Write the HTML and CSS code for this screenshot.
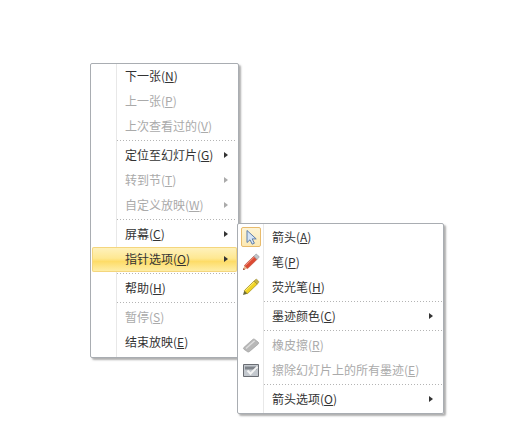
FILE: index.html
```html
<!DOCTYPE html>
<html lang="zh-CN">
<head>
<meta charset="utf-8">
<title>放映菜单</title>
<link rel="stylesheet" href="styles.css">
</head>
<body>
<div class="menu main">
  <div class="item"><span class="label">下一张(<u>N</u>)</span></div>
  <div class="item off"><span class="label">上一张(<u>P</u>)</span></div>
  <div class="item off"><span class="label">上次查看过的(<u>V</u>)</span></div>
  <div class="sep"></div>
  <div class="item"><span class="label">定位至幻灯片(<u>G</u>)</span><i class="arrow"></i></div>
  <div class="item off"><span class="label">转到节(<u>T</u>)</span><i class="arrow"></i></div>
  <div class="item off"><span class="label">自定义放映(<u>W</u>)</span><i class="arrow"></i></div>
  <div class="sep"></div>
  <div class="item"><span class="label">屏幕(<u>C</u>)</span><i class="arrow"></i></div>
  <div class="item hot"><span class="label">指针选项(<u>O</u>)</span><i class="arrow"></i></div>
  <div class="sep"></div>
  <div class="item"><span class="label">帮助(<u>H</u>)</span></div>
  <div class="sep"></div>
  <div class="item off"><span class="label">暂停(<u>S</u>)</span></div>
  <div class="item"><span class="label">结束放映(<u>E</u>)</span></div>
</div>
<div class="menu sub">
  <div class="item">
    <span class="icon checked"><svg width="17" height="17" viewBox="0 0 17 17"><path d="M4 1.500v12l3-2.700 2.200 4.400 2.200-1-2.200-4.300h4z" fill="#d5e4f6" stroke="#5f7ea8"/></svg></span>
    <span class="label">箭头(<u>A</u>)</span>
  </div>
  <div class="item">
    <span class="icon"><svg width="18" height="18" viewBox="0 0 18 18"><path d="M1 17l1.400-4.600 3.200 3.200z" fill="#e9b48a"/><path d="M1 17l.6-2 1.400 1.400z" fill="#8a3022"/><path d="M2.400 12.400L11.800 3.200l3.200 3.200-9.400 9.200z" fill="#dc4a33" stroke="#b4402c" stroke-width=".5"/><path d="M3.500 12.500L12.500 3.800" stroke="#f1917c" stroke-width="1" fill="none"/><path d="M11.800 3.200L13.600 1.400a1 1 0 0 1 1.300 0l1.900 1.900a1 1 0 0 1 0 1.300L15 6.400z" fill="#c3c5ca" stroke="#85888f" stroke-width=".5"/></svg></span>
    <span class="label">笔(<u>P</u>)</span>
  </div>
  <div class="item">
    <span class="icon"><svg width="18" height="18" viewBox="0 0 18 18"><path d="M1 17l1.300-4.400 3.100 3.100z" fill="#6b6a3a"/><path d="M2.300 12.600L12 3l3.200 3.200-9.800 9.500z" fill="#f0d323" stroke="#9f8a1b" stroke-width=".7"/><path d="M3.500 12.600L12.300 4" stroke="#fbee86" stroke-width="1" fill="none"/><path d="M12 3l1.600-1.500a1 1 0 0 1 1.300 0l1.700 1.700a1 1 0 0 1 0 1.300L15.200 6.200z" fill="#c7b445" stroke="#8f7e22" stroke-width=".5"/></svg></span>
    <span class="label">荧光笔(<u>H</u>)</span>
  </div>
  <div class="sep"></div>
  <div class="item"><span class="label">墨迹颜色(<u>C</u>)</span><i class="arrow"></i></div>
  <div class="sep"></div>
  <div class="item off">
    <span class="icon"><svg width="18" height="18" viewBox="0 0 18 18"><path d="M1.800 11.500L10.800 3.400a1.500 1.500 0 0 1 2 0l3.300 2.600a1.500 1.500 0 0 1 0 2.200L7.300 15.700a1.500 1.500 0 0 1-1.900 0L1.900 13.200a1.200 1.200 0 0 1-.1-1.700z" fill="#b8b8b8" stroke="#999" stroke-width=".6"/><path d="M4 12.500L12.600 4.800" stroke="#dedede" stroke-width="1.400" fill="none"/></svg></span>
    <span class="label">橡皮擦(<u>R</u>)</span>
  </div>
  <div class="item off">
    <span class="icon"><svg width="18" height="16" viewBox="0 0 18 16"><path d="M1.500 2.500h15v12h-15z" fill="#c3c8ce" stroke="#6a6d73"/><path d="M3 4.500h12v3H3z" fill="#7f848b"/><path d="M5.500 8.500l3 3.200 7-7" fill="none" stroke="#f4f4f4" stroke-width="2"/></svg></span>
    <span class="label">擦除幻灯片上的所有墨迹(<u>E</u>)</span>
  </div>
  <div class="sep"></div>
  <div class="item"><span class="label">箭头选项(<u>O</u>)</span><i class="arrow"></i></div>
</div>
</body>
</html>
```
FILE: styles.css
```css
html, body {
  margin: 0;
  padding: 0;
  background: #fff;
}
body {
  position: relative;
  width: 529px;
  height: 431px;
  overflow: hidden;
  font-family: "Noto Sans CJK SC", "Liberation Sans", sans-serif;
  font-size: 12px;
  color: #333;
}
.menu {
  position: absolute;
  box-sizing: border-box;
  background: linear-gradient(to right, #fff 0, #fff 25px, #e8e8e8 25px, #e8e8e8 26px, #fff 26px);
  border: 1px solid #a9adb2;
  border-radius: 2px;
  box-shadow: 2px 2px 2px rgba(110, 110, 110, .55);
}
.main {
  left: 90px;
  top: 63px;
  width: 149px;
  height: 295px;
  padding: 0 1px 1px;
}
.sub {
  left: 237px;
  top: 223px;
  width: 207px;
  height: 191px;
  padding: 1px 1px 0;
}
.item {
  box-sizing: border-box;
  height: 25px;
  display: flex;
  align-items: center;
  padding: 0 9px 2px 33px;
  position: relative;
}
.label {
  flex: 1;
  white-space: nowrap;
  line-height: 23px;
}
.off {
  color: #aaa;
}
.hot {
  background: linear-gradient(to bottom, #fef2c0 0, #fee892 45%, #fddc68 58%, #fef0ae 100%);
  box-shadow: inset 0 0 0 1px #f4d67e;
  border-radius: 2px;
}
.arrow {
  width: 0;
  height: 0;
  border-left: 4px solid #333;
  border-top: 3.5px solid transparent;
  border-bottom: 3.5px solid transparent;
}
.off .arrow {
  border-left-color: #aaa;
}
.sep {
  height: 4px;
  box-sizing: border-box;
  margin-left: 25px;
  padding-top: 1px;
}
.sep::before {
  content: "";
  display: block;
  height: 1px;
  background: repeating-linear-gradient(to right, #b4b4b4 0, #b4b4b4 1px, transparent 1px, transparent 3px);
}
.icon {
  position: absolute;
  left: 2px;
  top: 2px;
  width: 20px;
  height: 20px;
  box-sizing: border-box;
  display: flex;
  align-items: center;
  justify-content: center;
}
.checked {
  border: 1px solid #e8bb6c;
  background: linear-gradient(to bottom, #fdf4d6, #fce9b4);
  border-radius: 2px;
}
u {
  text-underline-offset: 1px;
}
```
